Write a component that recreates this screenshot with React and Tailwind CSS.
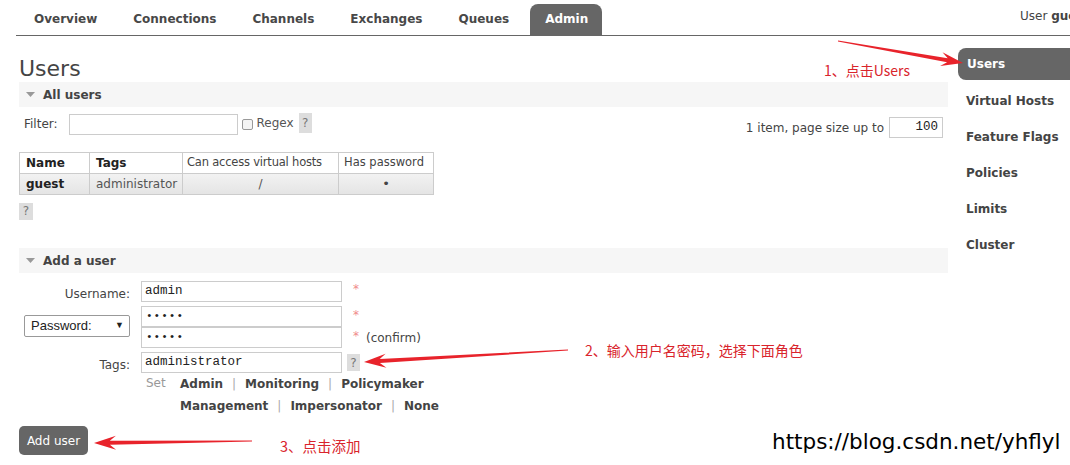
import React from "react";

function arrowPoints(x1, y1, x2, y2) {
  const dx = x2 - x1, dy = y2 - y1, L = Math.hypot(dx, dy);
  const ux = dx / L, uy = dy / L;
  const nx = -uy, ny = ux;
  const hl = 22, hw = 7;
  const p = (a, b) => `${a.toFixed(1)},${b.toFixed(1)}`;
  const bx = x2 - ux * hl, by = y2 - uy * hl;
  const mx = x2 - ux * hl * 0.72, my = y2 - uy * hl * 0.72;
  return [
    p(x2, y2),
    p(bx + nx * hw, by + ny * hw),
    p(mx + nx * 2, my + ny * 2),
    p(x1 + nx * 0.6, y1 + ny * 0.6),
    p(x1 - nx * 0.6, y1 - ny * 0.6),
    p(mx - nx * 2, my - ny * 2),
    p(bx - nx * hw, by - ny * hw),
  ].join(" ");
}

function Help({ className = "" }) {
  return (
    <span className={`inline-flex items-center justify-center bg-[#dddddd] text-[#777] text-[12px] ${className}`}>
      ?
    </span>
  );
}

function SectionHeader({ title }) {
  return (
    <div className="h-[25px] bg-[#f6f6f6] flex items-center pl-[7px]">
      <svg width="9" height="5" viewBox="0 0 9 5" className="mr-[8px]">
        <polygon points="0,0 9,0 4.5,5" fill="#999" />
      </svg>
      <span className="font-bold text-[12px] text-[#444]">{title}</span>
    </div>
  );
}

const tabs = ["Overview", "Connections", "Channels", "Exchanges", "Queues"];
const side = ["Virtual Hosts", "Feature Flags", "Policies", "Limits", "Cluster"];

export default function App() {
  return (
    <div className="relative w-[1070px] h-[465px] overflow-hidden bg-white text-[#444] font-['DejaVu_Sans',sans-serif] text-[12px]">
      {/* header */}
      <div className="flex h-[36px]">
        <div className="ml-[16px] flex-1 flex items-end border-b border-[#666] pl-[3px] gap-[6px]">
          {tabs.map((t) => (
            <div key={t} className="h-[31px] leading-[31px] px-[15px] font-bold text-[12px] text-[#484848]">
              {t}
            </div>
          ))}
          <div className="h-[31px] leading-[31px] pl-[15px] pr-[14px] font-bold text-[12px] text-white bg-[#666] rounded-t-[8px]">
            Admin
          </div>
          <div className="flex-1" />
          <div className="self-start w-[50px] overflow-hidden whitespace-nowrap pt-[8px] leading-[16px] text-[12px] text-[#444]">
            User <b>guest</b>
          </div>
        </div>
      </div>

      <div className="flex">
        {/* main */}
        <div className="ml-[19px] w-[929px]">
          <h1 className="mt-[20px] h-[26px] leading-[26px] text-[22px] font-normal text-[#444]">Users</h1>
          <SectionHeader title="All users" />

          <div className="mt-[6px] flex justify-between">
            <div className="flex items-start">
              <span className="ml-[5px] mt-[3px] leading-[16px]">Filter:</span>
              <div className="ml-[11px] mt-[1px] w-[169px] h-[21px] border border-[#ccc]" />
              <span className="ml-[4px] mt-[6px] w-[11px] h-[11px] border border-[#999] rounded-[2px] bg-[#f4f4f4]" />
              <span className="ml-[4px] mt-[2px] leading-[16px] text-[#555]">Regex</span>
              <Help className="ml-[5px] w-[13px] h-[20px]" />
            </div>
            <div className="flex items-center mt-[4px] mr-[5px]">
              <span className="text-[#444]">1 item, page size up to</span>
              <div className="ml-[5px] w-[54px] h-[21px] border border-[#ccc] text-right pr-[4px] leading-[19px] font-['Liberation_Mono',monospace] text-[12.5px] text-[#222]">
                100
              </div>
            </div>
          </div>

          <table className="mt-[14px] border-collapse table-fixed w-[414px] text-[12px] whitespace-nowrap">
            <colgroup>
              <col className="w-[70px]" />
              <col className="w-[93px]" />
              <col className="w-[156px]" />
              <col className="w-[95px]" />
            </colgroup>
            <thead>
              <tr className="h-[21px]">
                <th className="border border-[#ccc] text-left px-[6px] font-bold text-[#222]">Name</th>
                <th className="border border-[#ccc] text-left px-[6px] font-bold text-[#222]">Tags</th>
                <th className="border border-[#ccc] text-left px-[4px] font-normal text-[#444] text-[11.5px] tracking-[-0.2px] overflow-hidden">Can access virtual hosts</th>
                <th className="border border-[#ccc] text-left px-[5px] font-normal text-[#444] text-[11.5px] overflow-hidden">Has password</th>
              </tr>
            </thead>
            <tbody>
              <tr className="h-[19px] bg-gradient-to-b from-[#f2f2f2] to-[#e4e4e4]">
                <td className="border border-[#ccc] px-[6px] font-bold text-[#222]">guest</td>
                <td className="border border-[#ccc] px-[6px] text-[#555]">administrator</td>
                <td className="border border-[#ccc] text-center text-[#555]">/</td>
                <td className="border border-[#ccc] text-center text-[#444] text-[13px]">•</td>
              </tr>
            </tbody>
          </table>

          <Help className="mt-[8px] w-[14px] h-[17px]" />

          <div className="mt-[28px]">
            <SectionHeader title="Add a user" />
          </div>

          {/* form */}
          <div className="mt-[7px] flex flex-col">
            <div className="flex items-center">
              <div className="w-[111px] text-right pt-[5px]">Username:</div>
              <div className="ml-[11px] w-[201px] h-[21px] border border-[#ccc] pl-[3px] leading-[19px] font-['Liberation_Mono',monospace] text-[12.5px] text-[#222]">
                admin
              </div>
              <span className="self-start ml-[11px] text-[#f08a8a] text-[12px] leading-[12px] mt-[3px]">*</span>
            </div>

            <div className="flex items-center mt-[3px]">
              <div className="w-[111px] flex justify-end">
                <div className="w-[106px] h-[22px] border border-[#999] rounded-[2px] flex items-center justify-between pl-[6px] pr-[5px] font-['Liberation_Sans',sans-serif] text-[13px] text-[#222] -mt-[2px]">
                  <span>Password:</span>
                  <span className="text-[9px]">▼</span>
                </div>
              </div>
              <div className="ml-[11px] flex flex-col">
                <div className="flex">
                  <div className="w-[201px] h-[21px] border border-[#ccc] pl-[4px] leading-[19px] font-['Liberation_Mono',monospace] text-[11px] tracking-[1px] text-[#222]">
                    •••••
                  </div>
                  <span className="ml-[11px] text-[#f08a8a] text-[12px] leading-[12px] mt-[3px]">*</span>
                </div>
                <div className="flex">
                  <div className="w-[201px] h-[21px] border border-[#ccc] pl-[4px] leading-[19px] font-['Liberation_Mono',monospace] text-[11px] tracking-[1px] text-[#222]">
                    •••••
                  </div>
                  <span className="ml-[11px] text-[#f08a8a] text-[12px] leading-[12px] mt-[3px]">*</span>
                  <span className="ml-[7px] mt-[3px] leading-[16px] text-[#444]">(confirm)</span>
                </div>
              </div>
            </div>

            <div className="flex items-center mt-[3px]">
              <div className="w-[111px] text-right pt-[5px]">Tags:</div>
              <div className="ml-[11px] w-[201px] h-[21px] border border-[#ccc] pl-[3px] leading-[19px] font-['Liberation_Mono',monospace] text-[12.5px] text-[#222]">
                administrator
              </div>
              <Help className="ml-[5px] w-[13px] h-[17px]" />
            </div>

            <div className="flex leading-[22px] -mt-[1px]">
              <div className="ml-[127px] w-[34px] text-[#999] -mt-[1px]">Set</div>
              <div className="flex flex-col font-bold text-[#444]">
                <div>
                  Admin<span className="mx-[9px] font-normal text-[#aaa]">|</span>Monitoring
                  <span className="mx-[9px] font-normal text-[#aaa]">|</span>Policymaker
                </div>
                <div>
                  Management<span className="mx-[9px] font-normal text-[#aaa]">|</span>Impersonator
                  <span className="mx-[9px] font-normal text-[#aaa]">|</span>None
                </div>
              </div>
            </div>
          </div>

          <button className="mt-[9px] h-[29px] w-[69px] rounded-[5px] bg-[#666] text-white text-[12px] font-['DejaVu_Sans',sans-serif]">
            Add user
          </button>
        </div>

        {/* sidebar */}
        <div className="ml-[10px] w-[112px] mt-[12px] flex flex-col">
          <div className="h-[32px] leading-[32px] mb-[4px] pl-[9px] bg-[#666] rounded-l-[8px] text-white font-bold">
            Users
          </div>
          {side.map((s) => (
            <div key={s} className="h-[32px] leading-[34px] mb-[4px] pl-[8px] font-bold text-[#444] whitespace-nowrap">
              {s}
            </div>
          ))}
        </div>
      </div>

      {/* annotations */}
      <svg className="absolute left-0 top-0 pointer-events-none" width="1070" height="465">
        <polygon points={arrowPoints(838, 41, 963, 63)} fill="#e8232b" />
        <polygon points={arrowPoints(568, 350, 364, 362)} fill="#e8232b" />
        <polygon points={arrowPoints(252, 441, 94, 443)} fill="#e8232b" />
      </svg>
      <span className="absolute left-[824px] top-[60px] leading-[20px] text-[14px] text-[#d9242c] font-['Noto_Sans_CJK_SC',sans-serif]">
        1、点击Users
      </span>
      <span className="absolute left-[585px] top-[340px] leading-[20px] text-[14px] text-[#d9242c] font-['Noto_Sans_CJK_SC',sans-serif]">
        2、输入用户名密码，选择下面角色
      </span>
      <span className="absolute left-[280px] top-[436px] leading-[20px] text-[14.5px] text-[#d9242c] font-['Noto_Sans_CJK_SC',sans-serif]">
        3、点击添加
      </span>
      <span className="absolute left-[772px] top-[428px] leading-[28px] text-[21.5px] text-black font-['DejaVu_Sans',sans-serif]">
        https://blog.csdn.net/yhflyl
      </span>
    </div>
  );
}
